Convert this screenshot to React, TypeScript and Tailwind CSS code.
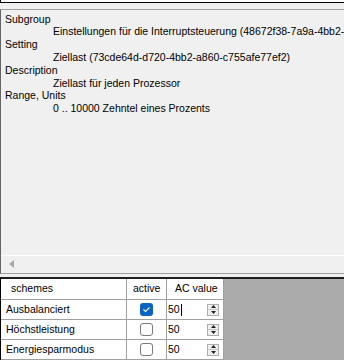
import React from "react";

const font = { fontFamily: '"Liberation Sans", Arial, sans-serif' };

function Spinner() {
  return (
    <div className="w-[12px] h-[12px] border border-[#adadad] bg-[#f0f0f0] flex flex-col">
      <div className="flex-1 flex items-center justify-center border-b border-[#c8c8c8]">
        <svg width="5" height="3" viewBox="0 0 5 3"><path d="M2.5 0 L5 3 L0 3 Z" fill="#222" /></svg>
      </div>
      <div className="flex-1 flex items-center justify-center">
        <svg width="5" height="3" viewBox="0 0 5 3"><path d="M0 0 L5 0 L2.5 3 Z" fill="#222" /></svg>
      </div>
    </div>
  );
}

function Check({ on }: { on: boolean }) {
  return on ? (
    <div className="w-[13px] h-[13px] rounded-[3px] bg-[#0a64c4] flex items-center justify-center">
      <svg width="9" height="7" viewBox="0 0 9 7"><path d="M1.5 3.5 L3.5 5.5 L7.5 1.5" stroke="#fff" strokeWidth="1.1" fill="none" /></svg>
    </div>
  ) : (
    <div className="w-[13px] h-[13px] rounded-[3px] bg-white border border-[#7a7a7a]" />
  );
}

function Row({ name, on, caret }: { name: string; on: boolean; caret?: boolean }) {
  return (
    <div className="flex h-[20px] border-b border-[#a0a0a0] bg-white">
      <div className="w-[126px] border-r border-[#a0a0a0] flex items-center pl-[5px] whitespace-nowrap overflow-hidden">{name}</div>
      <div className="w-[40px] border-r border-[#a0a0a0] flex items-center justify-center">
        <Check on={on} />
      </div>
      <div className="w-[57px] border-r border-[#a0a0a0] flex items-center pl-[1px] pr-[4px]">
        <span>50</span>
        {caret ? <span className="w-px h-[12px] bg-black ml-[1px]" /> : null}
        <div className="flex-1" />
        <Spinner />
      </div>
    </div>
  );
}

export default function App() {
  const labels: [string, string][] = [
    ["Subgroup", "Einstellungen für die Interruptsteuerung (48672f38-7a9a-4bb2-"],
    ["Setting", "Ziellast (73cde64d-d720-4bb2-a860-c755afe77ef2)"],
    ["Description", "Ziellast für jeden Prozessor"],
    ["Range, Units", "0 .. 10000 Zehntel eines Prozents"],
  ];
  return (
    <div className="w-[344px] h-[360px] overflow-hidden bg-[#f0f0f0] text-[10.5px] text-black flex flex-col" style={font}>
      <div className="h-[3px] bg-white border-b border-black border-l" />
      <div className="h-[7px]" />
      <div className="h-[265px] border-t border-b border-[#a0a0a0] border-l border-l-[#646464] flex flex-col">
        <div className="h-[245px] pt-[3px] overflow-hidden leading-[12.8px]">
          {labels.map(([l, v]) => (
            <React.Fragment key={l}>
              <div className="pl-[4px] whitespace-nowrap">{l}</div>
              <div className="pl-[52px] whitespace-nowrap">{v}</div>
            </React.Fragment>
          ))}
        </div>
        <div className="h-px bg-white" />
        <div className="h-[17px] flex items-center pl-[8px]">
          <svg width="5" height="8" viewBox="0 0 5 8"><path d="M5 0 L0 4 L5 8 Z" fill="#a8a8a8" /></svg>
        </div>
      </div>
      <div className="h-[4px]" />
      <div className="flex-1 border-t-2 border-t-[#1e1e1e] border-l border-l-black bg-[#ababab]">
        <div className="w-[223px]">
          <div className="flex h-[21px] border-b border-[#a0a0a0] bg-white">
            <div className="w-[126px] border-r border-[#a0a0a0] flex items-center pl-[10px]">schemes</div>
            <div className="w-[40px] border-r border-[#a0a0a0] flex items-center pl-[6px]">active</div>
            <div className="w-[57px] border-r border-[#a0a0a0] flex items-center pl-[8px]">AC value</div>
          </div>
          <Row name="Ausbalanciert" on={true} caret />
          <Row name="Höchstleistung" on={false} />
          <Row name="Energiesparmodus" on={false} />
        </div>
      </div>
    </div>
  );
}
